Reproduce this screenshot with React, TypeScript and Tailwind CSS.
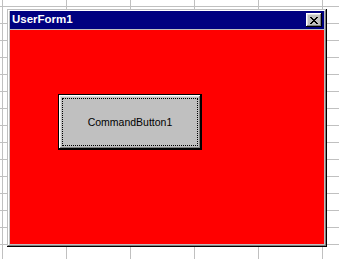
import React from 'react'

const CloseGlyph = () => {
	const rows = [
		'XX....XX',
		'.XX..XX.',
		'..XXXX..',
		'...XX...',
		'..XXXX..',
		'.XX..XX.',
		'XX....XX',
	]
	return (
		<svg width="8" height="7" viewBox="0 0 8 7" shapeRendering="crispEdges">
			{rows.map((row, y) =>
				row.split('').map((c, x) =>
					c === 'X' ? <rect key={`${x}-${y}`} x={x} y={y} width="1" height="1" fill="#000" /> : null
				)
			)}
		</svg>
	)
}

const App = () => {
	return (
		<main className="w-[339px] h-[259px] overflow-hidden bg-white bg-[linear-gradient(to_right,#c0c0c0_1px,transparent_1px),linear-gradient(to_bottom,#c0c0c0_1px,transparent_1px)] bg-size-[64px_17px] bg-position-[2px_6px] pt-[9px] pl-[7px]">
			<section className="w-[320px] h-[238px] flex flex-col bg-[#c0c0c0] px-[3px] pt-[2px] pb-[3px] shadow-[inset_-1px_-1px_0_#000,inset_1px_1px_0_#c0c0c0,inset_-2px_-2px_0_#808080,inset_2px_2px_0_#fff]">
				<header className="h-[18px] shrink-0 bg-[#000080] flex items-center justify-between pl-[2px] pr-[2px]">
					<h1 className="text-white font-bold text-[11.5px] leading-none font-['Liberation_Sans',Arial,sans-serif]">UserForm1</h1>
					<button className="w-[16px] h-[14px] bg-[#c0c0c0] flex items-center justify-center shadow-[inset_-1px_-1px_0_#000,inset_1px_1px_0_#fff,inset_-2px_-2px_0_#808080,inset_2px_2px_0_#dfdfdf]">
						<CloseGlyph />
					</button>
				</header>
				<div className="h-px shrink-0 bg-[#c0c0c0]" />
				<article className="flex-1 bg-[#ff0000] pl-[48px] pt-[64px]">
					<button className="w-[144px] h-[56px] flex border border-black bg-[#c0c0c0] p-[3px] shadow-[inset_-1px_-1px_0_#000,inset_1px_1px_0_#fff,inset_-2px_-2px_0_#808080,inset_2px_2px_0_#dfdfdf]">
						<div className="flex-1 flex items-center justify-center border border-dotted border-black">
							<span className="text-black text-[10.5px] leading-none font-['Liberation_Sans',Arial,sans-serif]">CommandButton1</span>
						</div>
					</button>
				</article>
			</section>
		</main>
	)
}

export default App
